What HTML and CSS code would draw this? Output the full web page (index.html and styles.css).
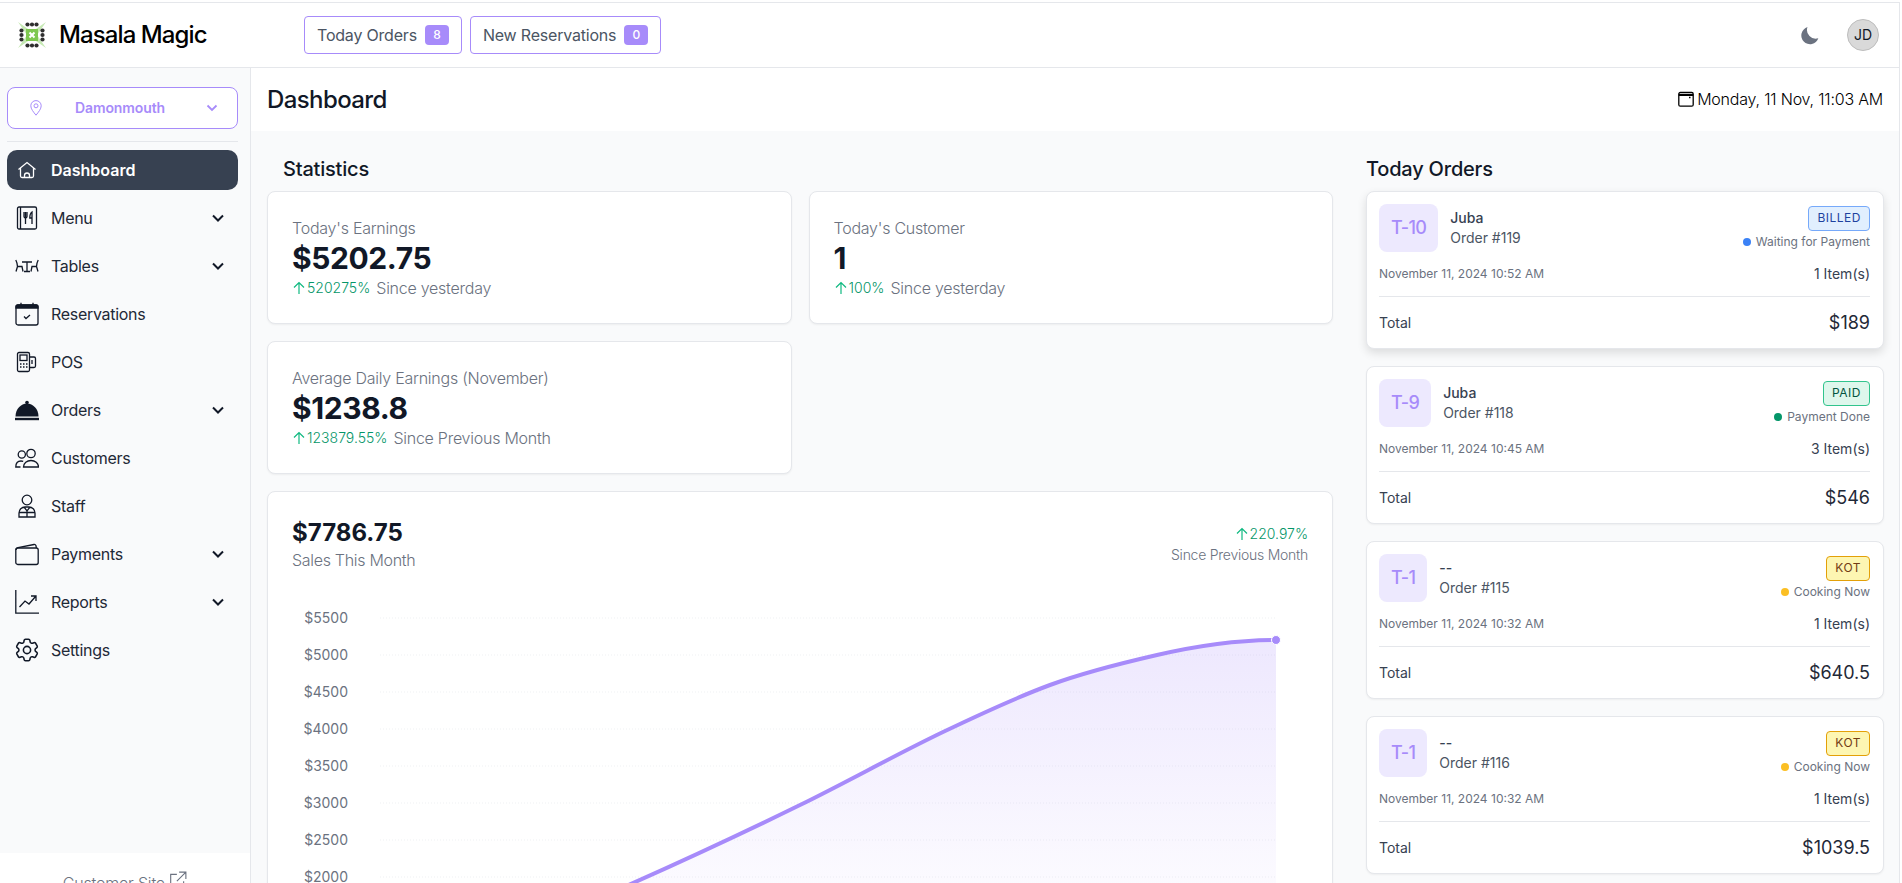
FILE: index.html
```html
<!DOCTYPE html>
<html lang="en">
<head>
    <meta charset="UTF-8">
    <meta name="viewport" content="width=device-width, initial-scale=1.0">
    <title>Masala Magic - Dashboard</title>
    <link rel="stylesheet" href="styles.css">
</head>
<body>
    <div class="app">
        <header class="topbar">
            <div class="brand">
                <svg class="brand-logo" viewBox="0 0 28 26">
                    <path class="logo-leaf" d="M0 0l13 9-4 4zM28 0L15 9l4 4zM0 26l13-9-4-4zM28 26l-13-9 4-4z"/>
                    <rect class="logo-leaf-strong" x="8" y="7" width="12" height="12"/>
                    <path class="logo-cross" d="M11.500 10.500l5 5M16.500 10.500l-5 5"/>
                    <g class="logo-dots">
                        <circle cx="9.500" cy="2.500" r="2.100"/><circle cx="14" cy="2.500" r="2.100"/><circle cx="18.500" cy="2.500" r="2.100"/>
                        <circle cx="9.500" cy="23.500" r="2.100"/><circle cx="14" cy="23.500" r="2.100"/><circle cx="18.500" cy="23.500" r="2.100"/>
                        <circle cx="3.500" cy="8.500" r="2.100"/><circle cx="3.500" cy="13" r="2.100"/><circle cx="3.500" cy="17.500" r="2.100"/>
                        <circle cx="24.500" cy="8.500" r="2.100"/><circle cx="24.500" cy="13" r="2.100"/><circle cx="24.500" cy="17.500" r="2.100"/>
                    </g>
                </svg>
                <span class="brand-name">Masala Magic</span>
            </div>
            <div class="top-links">
                <a class="top-link">Today Orders <span class="count">8</span></a>
                <a class="top-link">New Reservations <span class="count">0</span></a>
            </div>
            <div class="top-right">
                <svg class="moon" viewBox="0 0 24 24"><path d="M22 16A10.500 10.500 0 0 1 9 2.500a10.500 10.500 0 1 0 13 13.500z"/></svg>
                <div class="avatar">JD</div>
            </div>
        </header>

        <div class="body-row">
            <aside class="sidebar">
                <div class="location">
                    <svg class="location-pin" viewBox="0 0 12 16"><path d="M6 15.200C3.500 12 .8 9 .8 5.800a5.200 5.200 0 0 1 10.400 0C11.200 9 8.500 12 6 15.200z"/><circle cx="6" cy="5.800" r="2"/></svg>
                    <span class="location-name">Damonmouth</span>
                    <svg class="location-chevron" viewBox="0 0 12 8"><path d="M1.500 1.500 6 6l4.500-4.500"/></svg>
                </div>
                <div class="side-sep"></div>
                <nav class="side-nav">
                    <a class="nav-item active">
                        <svg class="nav-icon" viewBox="0 0 24 24"><path d="M3.500 11.500 12 4.500l8.500 7M5.500 10v8a1.500 1.500 0 0 0 1.500 1.500h10a1.500 1.500 0 0 0 1.500-1.500v-8M9.500 19.500v-2a2.500 2.500 0 0 1 5 0v2"/></svg>
                        <span>Dashboard</span>
                    </a>
                    <a class="nav-item">
                        <svg class="nav-icon" viewBox="0 0 24 24"><rect x="2.500" y="1" width="19" height="22" rx="1.500"/><path d="M5.500 1v22M9 6v4.500a1.500 1.500 0 0 0 3 0V6M10.500 6v12M17 18V6c-1.500 1-2.200 3-2.200 6H17"/></svg>
                        <span>Menu</span>
                        <svg class="nav-chevron" viewBox="0 0 12 8"><path d="M1 1.500l5 5 5-5"/></svg>
                    </a>
                    <a class="nav-item">
                        <svg class="nav-icon" viewBox="0 0 24 24"><path d="M7 8h10M12 8v9.500M9 17.500h6M.8 6c1 2 1.700 4 1.700 6.500H7l1 5M2.500 12.500 1 17.500M23.200 6c-1 2-1.700 4-1.700 6.500H17l-1 5M21.500 12.500l1.500 5"/></svg>
                        <span>Tables</span>
                        <svg class="nav-chevron" viewBox="0 0 12 8"><path d="M1 1.500l5 5 5-5"/></svg>
                    </a>
                    <a class="nav-item">
                        <svg class="nav-icon" viewBox="0 0 24 24"><rect x="1" y="3" width="22" height="20" rx="2"/><path class="fill-dark" d="M1 6V5a2 2 0 0 1 2-2h18a2 2 0 0 1 2 2v1z"/><path d="M6 .8V4M18 .8V4M9 14.500l2 2 4-3.500"/></svg>
                        <span>Reservations</span>
                    </a>
                    <a class="nav-item">
                        <svg class="nav-icon" viewBox="0 0 24 24"><rect x="2.500" y="2.500" width="12" height="19" rx="1.500"/><rect x="5" y="5" width="7" height="5.500"/><path d="M14.500 7h4.500a1.500 1.500 0 0 1 1.500 1.500V16a1.500 1.500 0 0 1-1.500 1.500h-4.500M5 14h1.500M8 14h1.500M11 14h1.500M5 17h1.500M8 17h1.500M11 17h1.500M17 10v4"/></svg>
                        <span>POS</span>
                    </a>
                    <a class="nav-item">
                        <svg class="nav-icon solid" viewBox="0 0 24 24"><circle cx="12" cy="4.500" r="1.800"/><path d="M.5 18.500C.5 11 6 5.500 12 5.500s11.500 5.500 11.500 13z"/><rect y="19.800" width="24" height="2.400"/></svg>
                        <span>Orders</span>
                        <svg class="nav-chevron" viewBox="0 0 12 8"><path d="M1 1.500l5 5 5-5"/></svg>
                    </a>
                    <a class="nav-item">
                        <svg class="nav-icon" viewBox="0 0 24 24"><circle cx="6.800" cy="8.500" r="3.600"/><circle cx="16" cy="7.500" r="4.200"/><path d="M8.500 21c0-4 3.500-6.500 7.500-6.500s7.500 2.500 7.500 6.500zM5.500 21H.8c0-3.500 2-6 5.200-6 .8 0 1.500.1 2.200.4"/></svg>
                        <span>Customers</span>
                    </a>
                    <a class="nav-item">
                        <svg class="nav-icon" viewBox="0 0 24 24"><circle cx="12" cy="6" r="4.800"/><path d="M4 23v-4a6 6 0 0 1 6-6h4a6 6 0 0 1 6 6v4zM12 17v6M4 18.500h16M9 13l3 4 3-4"/></svg>
                        <span>Staff</span>
                    </a>
                    <a class="nav-item">
                        <svg class="nav-icon" viewBox="0 0 24 24"><rect x=".8" y="6" width="22.400" height="16.500" rx="2"/><path d="M1 8c0-1 .6-2 2-2.300l16-3.200c1-.2 1.800.3 2 1.500l.4 2"/></svg>
                        <span>Payments</span>
                        <svg class="nav-chevron" viewBox="0 0 12 8"><path d="M1 1.500l5 5 5-5"/></svg>
                    </a>
                    <a class="nav-item">
                        <svg class="nav-icon" viewBox="0 0 24 24"><path d="M.8 0v23.200H24M4.500 17l5.500-6 4 3 6.500-7.500M16 6h5v5"/></svg>
                        <span>Reports</span>
                        <svg class="nav-chevron" viewBox="0 0 12 8"><path d="M1 1.500l5 5 5-5"/></svg>
                    </a>
                    <a class="nav-item">
                        <svg class="nav-icon" viewBox="2 2 20 20"><path d="M9.594 3.940c.09-.542.56-.94 1.110-.94h2.593c.55 0 1.020.398 1.110.94l.213 1.281c.063.374.313.686.645.870.074.04.147.083.22.127.325.196.72.257 1.075.124l1.217-.456a1.125 1.125 0 0 1 1.370.49l1.296 2.247a1.125 1.125 0 0 1-.26 1.431l-1.003.827c-.293.241-.438.613-.43.992a7.723 7.723 0 0 1 0 .255c-.008.378.137.75.43.991l1.004.827c.424.35.534.955.26 1.430l-1.298 2.247a1.125 1.125 0 0 1-1.369.491l-1.217-.456c-.355-.133-.75-.072-1.076.124a6.470 6.470 0 0 1-.22.128c-.331.183-.581.495-.644.869l-.213 1.281c-.09.543-.56.94-1.110.94h-2.594c-.55 0-1.019-.398-1.110-.94l-.213-1.281c-.062-.374-.312-.686-.644-.87a6.520 6.520 0 0 1-.22-.127c-.325-.196-.72-.257-1.076-.124l-1.217.456a1.125 1.125 0 0 1-1.369-.49l-1.297-2.247a1.125 1.125 0 0 1 .26-1.431l1.004-.827c.292-.24.437-.613.43-.991a6.932 6.932 0 0 1 0-.255c.007-.38-.138-.751-.43-.992l-1.004-.827a1.125 1.125 0 0 1-.26-1.430l1.297-2.247a1.125 1.125 0 0 1 1.370-.491l1.216.456c.356.133.751.072 1.076-.124.072-.044.146-.086.22-.128.332-.183.582-.495.644-.869l.214-1.280Z"/><circle cx="12" cy="12" r="3"/></svg>
                        <span>Settings</span>
                    </a>
                </nav>
                <div class="side-footer">
                    <a class="site-link">Customer Site
                        <svg class="site-icon" viewBox="0 0 16 16"><path d="M7 3H1.500v11.500H13V9M9 1h6v6M15 1 7 9"/></svg>
                    </a>
                </div>
            </aside>

            <main class="main">
                <div class="page-head">
                    <h1>Dashboard</h1>
                    <div class="page-date">
                        <svg class="date-icon" viewBox="0 0 16 16"><rect x=".8" y="1.500" width="14.400" height="13.700" rx="1.500"/><path d="M.8 4h14.400" stroke-width="2"/><path d="M11 6.500h1.500" stroke-width="1.500"/></svg>
                        <span>Monday, 11 Nov, 11:03 AM</span>
                    </div>
                </div>

                <div class="content">
                    <section class="left-col">
                        <h2 class="section-title stats-title">Statistics</h2>
                        <div class="stat-grid">
                            <div class="card stat-card">
                                <div class="stat-label">Today's Earnings</div>
                                <div class="stat-value">$5202.75</div>
                                <div class="stat-change">
                                    <svg class="arrow-up" viewBox="0 0 12 14"><path d="M6 13V1.500M1 6.500l5-5 5 5"/></svg>
                                    <span class="up">520275%</span>
                                    <span class="since">Since yesterday</span>
                                </div>
                            </div>
                            <div class="card stat-card">
                                <div class="stat-label">Today's Customer</div>
                                <div class="stat-value">1</div>
                                <div class="stat-change">
                                    <svg class="arrow-up" viewBox="0 0 12 14"><path d="M6 13V1.500M1 6.500l5-5 5 5"/></svg>
                                    <span class="up">100%</span>
                                    <span class="since">Since yesterday</span>
                                </div>
                            </div>
                            <div class="card stat-card">
                                <div class="stat-label">Average Daily Earnings (November)</div>
                                <div class="stat-value">$1238.8</div>
                                <div class="stat-change">
                                    <svg class="arrow-up" viewBox="0 0 12 14"><path d="M6 13V1.500M1 6.500l5-5 5 5"/></svg>
                                    <span class="up">123879.55%</span>
                                    <span class="since">Since Previous Month</span>
                                </div>
                            </div>
                        </div>

                        <div class="card chart-card">
                            <div class="chart-head">
                                <div>
                                    <div class="chart-total">$7786.75</div>
                                    <div class="chart-sub">Sales This Month</div>
                                </div>
                                <div class="chart-change">
                                    <div class="chart-change-top">
                                        <svg class="arrow-up" viewBox="0 0 12 14"><path d="M6 13V1.500M1 6.500l5-5 5 5"/></svg>
                                        <span class="up">220.97%</span>
                                    </div>
                                    <div class="chart-since">Since Previous Month</div>
                                </div>
                            </div>
                            <svg class="chart" viewBox="292 590 1019 400">
                                <defs>
                                    <linearGradient id="salesFill" x1="0" y1="640" x2="0" y2="900" gradientUnits="userSpaceOnUse">
                                        <stop offset="0" stop-color="#a78bfa" stop-opacity="0.2"/>
                                        <stop offset="1" stop-color="#a78bfa" stop-opacity="0.03"/>
                                    </linearGradient>
                                </defs>
                                <g class="grid-lines">
                                    <path d="M380 618H1276M380 655H1276M380 692H1276M380 729H1276M380 766H1276M380 803H1276M380 840H1276M380 877H1276"/>
                                </g>
                                <g class="axis-labels" transform="translate(0 -0.5)">
                                    <text x="348" y="618">$5500</text>
                                    <text x="348" y="655">$5000</text>
                                    <text x="348" y="692">$4500</text>
                                    <text x="348" y="729">$4000</text>
                                    <text x="348" y="766">$3500</text>
                                    <text x="348" y="803">$3000</text>
                                    <text x="348" y="840">$2500</text>
                                    <text x="348" y="877">$2000</text>
                                </g>
                                <path fill="url(#salesFill)" d="M560 915C640 880.600 720 844.200 800 805C847.700 781.600 895.300 754.900 943 732C978.700 714.900 1014.300 698.200 1050 685C1085.700 671.800 1121.300 663.200 1157 655C1196.300 646 1236 640 1276 640V990H560Z"/>
                                <path class="sales-line" d="M560 915C640 880.600 720 844.200 800 805C847.700 781.600 895.300 754.900 943 732C978.700 714.900 1014.300 698.200 1050 685C1085.700 671.800 1121.300 663.200 1157 655C1196.300 646 1236 640 1276 640"/>
                                <circle class="sales-dot" cx="1276" cy="640" r="4.500"/>
                            </svg>
                        </div>
                    </section>

                    <section class="right-col">
                        <h2 class="section-title">Today Orders</h2>
                        <div class="order-list">
                            <div class="card order-card raised">
                                <div class="order-top">
                                    <div class="table-tag">T-10</div>
                                    <div class="order-who">
                                        <div class="order-name">Juba</div>
                                        <div class="order-no">Order #119</div>
                                    </div>
                                    <div class="order-state">
                                        <span class="state-badge billed">BILLED</span>
                                        <div class="state-note"><i class="dot dot-blue"></i>Waiting for Payment</div>
                                    </div>
                                </div>
                                <div class="order-meta"><span class="order-date">November 11, 2024 10:52 AM</span><span>1 Item(s)</span></div>
                                <div class="order-total"><span>Total</span><span class="amount">$189</span></div>
                            </div>
                            <div class="card order-card">
                                <div class="order-top">
                                    <div class="table-tag">T-9</div>
                                    <div class="order-who">
                                        <div class="order-name">Juba</div>
                                        <div class="order-no">Order #118</div>
                                    </div>
                                    <div class="order-state">
                                        <span class="state-badge paid">PAID</span>
                                        <div class="state-note"><i class="dot dot-green"></i>Payment Done</div>
                                    </div>
                                </div>
                                <div class="order-meta"><span class="order-date">November 11, 2024 10:45 AM</span><span>3 Item(s)</span></div>
                                <div class="order-total"><span>Total</span><span class="amount">$546</span></div>
                            </div>
                            <div class="card order-card">
                                <div class="order-top">
                                    <div class="table-tag">T-1</div>
                                    <div class="order-who">
                                        <div class="order-name">--</div>
                                        <div class="order-no">Order #115</div>
                                    </div>
                                    <div class="order-state">
                                        <span class="state-badge kot">KOT</span>
                                        <div class="state-note"><i class="dot dot-yellow"></i>Cooking Now</div>
                                    </div>
                                </div>
                                <div class="order-meta"><span class="order-date">November 11, 2024 10:32 AM</span><span>1 Item(s)</span></div>
                                <div class="order-total"><span>Total</span><span class="amount">$640.5</span></div>
                            </div>
                            <div class="card order-card">
                                <div class="order-top">
                                    <div class="table-tag">T-1</div>
                                    <div class="order-who">
                                        <div class="order-name">--</div>
                                        <div class="order-no">Order #116</div>
                                    </div>
                                    <div class="order-state">
                                        <span class="state-badge kot">KOT</span>
                                        <div class="state-note"><i class="dot dot-yellow"></i>Cooking Now</div>
                                    </div>
                                </div>
                                <div class="order-meta"><span class="order-date">November 11, 2024 10:32 AM</span><span>1 Item(s)</span></div>
                                <div class="order-total"><span>Total</span><span class="amount">$1039.5</span></div>
                            </div>
                        </div>
                    </section>
                </div>
            </main>
        </div>
    </div>
</body>
</html>
```
FILE: styles.css
```css
* {
    box-sizing: border-box;
}
html, body {
    height: 100%;
    margin: 0;
    overflow: hidden;
}
body {
    font-family: "Inter", "Liberation Sans", sans-serif;
    font-size: 16px;
    line-height: 24px;
    color: #111827;
    background-color: white;
}
h1, h2 {
    margin: 0;
}
.app {
    display: flex;
    flex-direction: column;
    height: calc(100vh - 2px);
    margin: 2px 2px 0 0;
    border-top: 1px solid #e5e7eb;
    border-right: 1px solid #e5e7eb;
}

/* top bar */
.topbar {
    display: flex;
    align-items: center;
    flex: none;
    height: 65px;
    padding: 0 20px 0 18px;
    background-color: white;
    border-bottom: 1px solid #e5e7eb;
}
.brand {
    display: flex;
    align-items: center;
    gap: 13px;
    width: 286px;
}
.brand-logo {
    width: 28px;
    height: 26px;
}
.logo-leaf {
    fill: #c6e9b4;
}
.logo-leaf-strong {
    fill: #7ec850;
}
.logo-cross {
    stroke: white;
    stroke-width: 2;
}
.logo-dots {
    fill: #2f2f2f;
}
.brand-name {
    font-size: 24px;
    font-weight: 500;
    line-height: 32px;
    letter-spacing: -0.9px;
    color: #000;
}
.top-links {
    display: flex;
    gap: 8px;
}
.top-link {
    display: flex;
    align-items: center;
    gap: 8px;
    height: 38px;
    padding: 0 12px;
    border: 1px solid #a78bfa;
    border-radius: 4px;
    color: #4b5563;
    letter-spacing: -0.2px;
}
.count {
    min-width: 24px;
    height: 20px;
    border-radius: 4px;
    background-color: #a78bfa;
    color: white;
    font-size: 12px;
    font-weight: 500;
    line-height: 20px;
    text-align: center;
}
.top-right {
    display: flex;
    align-items: center;
    gap: 27px;
    margin-left: auto;
}
.moon {
    width: 20px;
    height: 20px;
    fill: #6b7280;
}
.avatar {
    width: 32px;
    height: 32px;
    border: 1px solid #bdbdbd;
    border-radius: 50%;
    background-color: #d9d9d9;
    font-size: 14px;
    line-height: 30px;
    text-align: center;
}

.body-row {
    display: flex;
    flex: 1;
    min-height: 0;
}

/* sidebar */
.sidebar {
    display: flex;
    flex-direction: column;
    flex: none;
    width: 251px;
    padding-top: 19px;
    background-color: #f9fafb;
    border-right: 1px solid #e5e7eb;
}
.location {
    display: flex;
    align-items: center;
    height: 42px;
    margin: 0 12px 0 7px;
    padding: 0 19px 0 22px;
    background-color: white;
    border: 1px solid #a78bfa;
    border-radius: 8px;
}
.location-pin {
    width: 12px;
    height: 16px;
    fill: none;
    stroke: #a78bfa;
    stroke-width: 1;
}
.location-name {
    flex: 1;
    padding-right: 8px;
    text-align: center;
    font-size: 14px;
    font-weight: 600;
    letter-spacing: -0.1px;
    color: #a78bfa;
}
.location-chevron {
    width: 12px;
    height: 8px;
    fill: none;
    stroke: #a78bfa;
    stroke-width: 1.800;
}
.side-sep {
    height: 1px;
    margin: 12px 12px 8px 7px;
    background-color: #e5e7eb;
}
.side-nav {
    display: flex;
    flex-direction: column;
    flex: 1;
    gap: 8px;
    padding: 0 12px 0 7px;
}
.nav-item {
    display: flex;
    align-items: center;
    gap: 12px;
    flex: none;
    height: 40px;
    padding: 0 14px 0 8px;
    border-radius: 10px;
    color: #1f2937;
    letter-spacing: -0.3px;
}
.nav-item.active {
    background-color: #374151;
    color: white;
    font-weight: 600;
    letter-spacing: 0;
}
.nav-icon {
    flex: none;
    width: 24px;
    height: 24px;
    fill: none;
    stroke: #111827;
    stroke-width: 1.300;
}
.nav-icon.solid {
    fill: #111827;
    stroke: none;
}
.nav-item.active .nav-icon {
    stroke: white;
}
.fill-dark {
    fill: #111827;
}
.nav-chevron {
    width: 12px;
    height: 8px;
    margin-left: auto;
    fill: none;
    stroke: #111827;
    stroke-width: 2;
}
.side-footer {
    flex: none;
    height: 30px;
    padding-top: 18px;
    background-color: white;
    color: #6b7280;
    font-weight: 300;
    letter-spacing: -0.2px;
    text-align: center;
}
.site-link {
    white-space: nowrap;
}
.site-icon {
    width: 18px;
    height: 18px;
    fill: none;
    stroke: #6b7280;
}

/* main area */
.main {
    display: flex;
    flex-direction: column;
    flex: 1;
    min-width: 0;
    overflow: hidden;
}
.page-head {
    display: flex;
    align-items: center;
    justify-content: space-between;
    flex: none;
    height: 63px;
    padding: 0 16px;
    background-color: white;
}
.page-head h1 {
    font-size: 24px;
    font-weight: 500;
    line-height: 32px;
    letter-spacing: -0.6px;
}
.page-date {
    display: flex;
    align-items: center;
    gap: 3px;
    margin-bottom: 2px;
    color: #000;
    font-weight: 300;
    letter-spacing: -0.2px;
}
.date-icon {
    width: 16px;
    height: 16px;
    fill: none;
    stroke: #000;
    stroke-width: 1.300;
}
.content {
    display: flex;
    flex: 1;
    gap: 33px;
    padding: 24px 15px 0 16px;
    background-color: #f9fafb;
}
.left-col {
    flex: none;
    width: 1066px;
}
.right-col {
    flex: 1;
    min-width: 0;
}
.section-title {
    margin-bottom: 8px;
    font-size: 20px;
    font-weight: 500;
    line-height: 28px;
    letter-spacing: -0.2px;
}
.stats-title {
    padding-left: 16px;
}
.card {
    background-color: white;
    border: 1px solid #e5e7eb;
    border-radius: 8px;
    box-shadow: 0 1px 2px rgba(0, 0, 0, 0.05);
}
.stat-grid {
    display: grid;
    grid-template-columns: 1fr 1fr;
    gap: 17px;
}
.stat-card {
    padding: 24px 24px 23px;
}
.stat-label {
    color: #6b7280;
    font-weight: 300;
    letter-spacing: -0.25px;
}
.stat-value {
    font-size: 30px;
    font-weight: 700;
    line-height: 36px;
    letter-spacing: -0.4px;
}
.stat-change {
    display: flex;
    align-items: center;
}
.arrow-up {
    flex: none;
    width: 12px;
    height: 14px;
    margin: 0 2px 0 1px;
    fill: none;
    stroke: #10b981;
    stroke-width: 1.200;
}
.up {
    font-size: 14px;
    font-weight: 300;
    color: #059669;
}
.since {
    margin-left: 6px;
    color: #6b7280;
    font-weight: 300;
    letter-spacing: -0.25px;
}

/* chart card */
.chart-card {
    margin-top: 17px;
    height: 600px;
    padding: 24px;
}
.chart-head {
    display: flex;
    justify-content: space-between;
}
.chart-total {
    padding-top: 1px;
    font-size: 24px;
    font-weight: 700;
    line-height: 31px;
}
.chart-sub {
    color: #6b7280;
    font-weight: 300;
    letter-spacing: -0.3px;
}
.chart-change {
    padding-top: 7px;
    font-size: 14px;
    line-height: 21px;
    text-align: right;
}
.chart-change-top {
    display: flex;
    align-items: center;
    justify-content: flex-end;
}
.chart-since {
    color: #6b7280;
    font-weight: 300;
    letter-spacing: -0.25px;
}
.chart {
    display: block;
    width: 1019px;
    height: 400px;
    margin-top: 18px;
}
.grid-lines path {
    fill: none;
    stroke: #eff1f3;
    stroke-dasharray: 1 2;
}
.axis-labels text {
    font-size: 14px;
    fill: #6b7280;
    text-anchor: end;
    dominant-baseline: central;
}
.sales-line {
    fill: none;
    stroke: #a78bfa;
    stroke-width: 4;
}
.sales-dot {
    fill: #a78bfa;
    stroke: white;
    stroke-width: 1;
}

/* orders */
.order-list {
    display: flex;
    flex-direction: column;
    gap: 17px;
}
.order-card {
    height: 158px;
    padding: 12px 13px 12px 12px;
}
.order-card.raised {
    box-shadow: 0 4px 10px rgba(0, 0, 0, 0.12);
}
.order-top {
    display: flex;
    align-items: center;
    gap: 12px;
    height: 48px;
}
.table-tag {
    height: 48px;
    padding: 0 12px;
    border-radius: 8px;
    background-color: #ede9fe;
    color: #a78bfa;
    font-size: 18px;
    font-weight: 500;
    line-height: 48px;
    letter-spacing: -0.7px;
}
.order-who {
    font-size: 14px;
    line-height: 20px;
}
.order-name {
    font-weight: 500;
    color: #374151;
}
.order-no {
    color: #4b5563;
}
.order-state {
    display: flex;
    flex-direction: column;
    align-items: flex-end;
    gap: 3px;
    margin-left: auto;
}
.state-badge {
    height: 25px;
    padding: 0 8px;
    border: 1px solid;
    border-radius: 4px;
    font-size: 12px;
    line-height: 22px;
    letter-spacing: 0.5px;
}
.billed {
    background-color: #e1effe;
    border-color: #76a9fa;
    color: #1e429f;
}
.paid {
    background-color: #def7ec;
    border-color: #31c48d;
    color: #03543f;
}
.kot {
    background-color: #fdf6b2;
    border-color: #e3a008;
    color: #723b13;
}
.state-note {
    display: flex;
    align-items: center;
    gap: 5px;
    font-size: 12px;
    line-height: 16px;
    color: #6b7280;
}
.dot {
    width: 8px;
    height: 8px;
    border-radius: 50%;
}
.dot-blue {
    background-color: #3b82f6;
}
.dot-green {
    background-color: #059669;
}
.dot-yellow {
    background-color: #fbbf24;
}
.order-meta {
    display: flex;
    align-items: center;
    justify-content: space-between;
    margin-top: 12px;
    padding-bottom: 12px;
    border-bottom: 1px solid #e5e7eb;
    font-size: 14px;
    line-height: 20px;
    color: #374151;
}
.order-date {
    font-size: 12px;
    color: #6b7280;
}
.order-total {
    display: flex;
    align-items: center;
    justify-content: space-between;
    padding-top: 12px;
    font-size: 14px;
    line-height: 28px;
    color: #374151;
}
.amount {
    font-size: 18px;
    color: #1f2937;
}
```
